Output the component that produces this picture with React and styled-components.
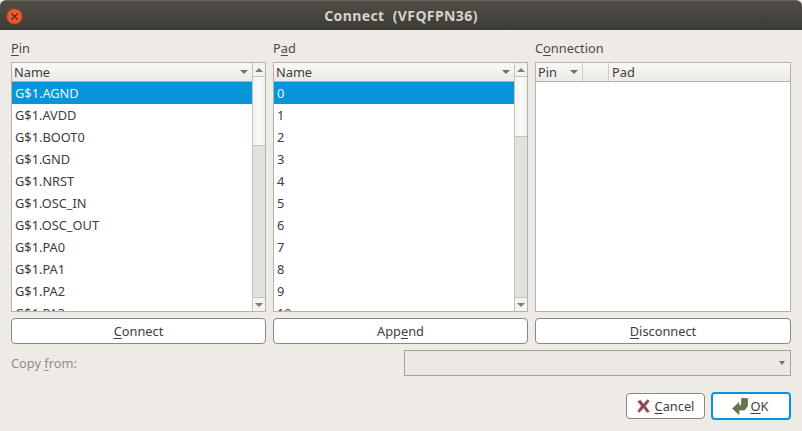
import styled, { createGlobalStyle } from "styled-components";

const GlobalStyle = createGlobalStyle`
  html, body {
    margin: 0;
    padding: 0;
    background: #2f2e2a;
  }
  * {
    box-sizing: border-box;
  }
`;

const Win = styled.div`
  width: 802px;
  height: 431px;
  display: flex;
  flex-direction: column;
  background: #eeebe6;
  font-family: "Noto Sans", "DejaVu Sans", sans-serif;
  font-size: 12.8px;
  color: #3d3d3d;
  overflow: hidden;
`;

const TitleBar = styled.div`
  position: relative;
  height: 30px;
  flex: none;
  display: flex;
  align-items: center;
  justify-content: center;
  background: linear-gradient(#514e47, #3d3b36);
  border-top: 1px solid #66635b;
  border-radius: 6px 6px 0 0;
  color: #d6d2c9;
  font-weight: 700;
  font-size: 14px;
  letter-spacing: 0.4px;
  white-space: pre;
`;

const CloseButton = styled.div`
  position: absolute;
  left: 6px;
  top: 7px;
  width: 17px;
  height: 17px;
  border-radius: 50%;
  background: radial-gradient(circle at 50% 40%, #f0693a, #d9491d);
  border: 1px solid #8c3a1e;
  display: grid;
  place-content: center;
`;

const Body = styled.div`
  flex: 1;
  display: flex;
  flex-direction: column;
  padding: 10px 11px 11px;
`;

const Columns = styled.div`
  display: grid;
  grid-template-columns: 255px 255px 256px;
  column-gap: 7px;
`;

const Column = styled.div`
  display: flex;
  flex-direction: column;
`;

const Label = styled.div`
  height: 22px;
  line-height: 16px;
  color: #4a4a48;
`;

const Key = styled.span`
  text-decoration: underline;
  text-underline-offset: 2px;
  text-decoration-thickness: 1px;
`;

const ListBox = styled.div`
  display: flex;
  height: 250px;
  border: 1px solid #b5b2ac;
  background: #fff;
  overflow: hidden;
`;

const ListMain = styled.div`
  flex: 1;
  min-width: 0;
  display: flex;
  flex-direction: column;
`;

const Header = styled.div`
  height: 19px;
  flex: none;
  display: flex;
  background: linear-gradient(#faf9f7, #edeae5);
  border-bottom: 1px solid #b5b2ac;
`;

const HeaderCell = styled.div`
  display: flex;
  align-items: center;
  justify-content: space-between;
  flex: ${(p) => (p.$width ? `0 0 ${p.$width}px` : 1)};
  padding: 0 3px 0 ${(p) => p.$pad ?? 2}px;
  border-right: ${(p) => (p.$divider ? "1px solid #cfccc6" : "none")};
`;

const Caret = styled.span`
  width: 0;
  height: 0;
  margin-right: ${(p) => p.$gap ?? 1}px;
  border-left: ${(p) => p.$size ?? 4}px solid transparent;
  border-right: ${(p) => p.$size ?? 4}px solid transparent;
  border-top: 4px solid #6e6e6a;
`;

const Rows = styled.div`
  flex: 1;
  overflow: hidden;
`;

const Row = styled.div`
  height: 22px;
  flex: none;
  display: flex;
  align-items: center;
  padding-left: 3px;
  background: ${(p) => (p.$selected ? "#0894d8" : "transparent")};
  color: ${(p) => (p.$selected ? "#e6f4fb" : "#3d3d3d")};
`;

const Scrollbar = styled.div`
  width: 13px;
  flex: none;
  display: flex;
  flex-direction: column;
  border-left: 1px solid #c6c3bd;
  background: #e3e1dc;
`;

const ScrollButton = styled.div`
  height: 14px;
  flex: none;
  display: grid;
  place-content: center;
  background: #f5f3f0;
  border-${(p) => (p.$down ? "top" : "bottom")}: 1px solid #c6c3bd;
`;

const ScrollArrow = styled.span`
  width: 0;
  height: 0;
  border-left: 4px solid transparent;
  border-right: 4px solid transparent;
  ${(p) => (p.$down ? "border-top" : "border-bottom")}: 4px solid #7d7c78;
`;

const Thumb = styled.div`
  height: ${(p) => p.$height}px;
  flex: none;
  background: linear-gradient(90deg, #f4f2ef, #fbfaf9 50%, #f2f0ec);
  border-bottom: 1px solid #c6c3bd;
`;

const Trough = styled.div`
  flex: 1;
`;

const PushButton = styled.div`
  height: 26px;
  margin-top: 6px;
  display: flex;
  align-items: center;
  justify-content: center;
  background: #fff;
  border: 1px solid #8a8884;
  border-radius: 4px;
`;

const CopyRow = styled.div`
  height: 26px;
  margin-top: 6px;
  display: flex;
  align-items: center;
  justify-content: space-between;
`;

const MutedLabel = styled.div`
  color: #8f8e8a;
`;

const Combo = styled.div`
  width: 387px;
  height: 26px;
  display: flex;
  align-items: center;
  justify-content: flex-end;
  padding-right: 5px;
  border: 1px solid #a5a39e;
  background: #ebe8e3;
`;

const Footer = styled.div`
  margin-top: 16px;
  display: flex;
  justify-content: flex-end;
  align-items: center;
  gap: 6px;
`;

const DialogButton = styled.div`
  width: ${(p) => p.$width}px;
  height: ${(p) => (p.$primary ? 28 : 26)}px;
  display: flex;
  align-items: center;
  justify-content: center;
  gap: ${(p) => (p.$primary ? 3 : 5)}px;
  padding-right: ${(p) => (p.$primary ? 2 : 0)}px;
  background: #fff;
  border: ${(p) => (p.$primary ? "2px solid #0894d8" : "1px solid #8a8884")};
  border-radius: 4px;
`;

const pins = ["AGND", "AVDD", "BOOT0", "GND", "NRST", "OSC_IN", "OSC_OUT", "PA0", "PA1", "PA2", "PA3"];
const pads = ["0", "1", "2", "3", "4", "5", "6", "7", "8", "9", "10"];

function ListPanel({ items, thumb }) {
  return (
    <ListBox>
      <ListMain>
        <Header>
          <HeaderCell>
            Name
            <Caret />
          </HeaderCell>
        </Header>
        <Rows>
          {items.map((item, i) => (
            <Row key={item} $selected={i === 0}>
              {item}
            </Row>
          ))}
        </Rows>
      </ListMain>
      <Scrollbar>
        <ScrollButton>
          <ScrollArrow />
        </ScrollButton>
        <Thumb $height={thumb} />
        <Trough />
        <ScrollButton $down>
          <ScrollArrow $down />
        </ScrollButton>
      </Scrollbar>
    </ListBox>
  );
}

function CloseIcon() {
  return (
    <svg width="9" height="9" viewBox="0 0 9 9">
      <path d="M1.5 1.5l6 6M7.5 1.5l-6 6" stroke="#57200f" strokeWidth="1.3" />
    </svg>
  );
}

function CancelIcon() {
  return (
    <svg width="13" height="14" viewBox="0 0 13 14">
      <path
        d="M0.5 2.5L3.5 1l3 4L10.5 0.5 12.5 2 8.5 7l4 5.5-2.5 1L6.5 9 2.5 13.5 0.5 12l3.8-5z"
        fill="#8c4650"
        stroke="#a9767c"
        strokeWidth="0.5"
      />
    </svg>
  );
}

function OkIcon() {
  return (
    <svg width="16" height="17" viewBox="0 0 16 17">
      <path
        d="M9.5 0.5h6v7.5l-3 4H7v4.5L0.5 10.5 7 4.5v3h2.5z"
        fill="#67754f"
        stroke="#515e3e"
        strokeWidth="0.6"
      />
    </svg>
  );
}

export default function App() {
  return (
    <Win>
      <GlobalStyle />
      <TitleBar>
        <CloseButton>
          <CloseIcon />
        </CloseButton>
        {"Connect  (VFQFPN36)"}
      </TitleBar>
      <Body>
        <Columns>
          <Column>
            <Label>
              <Key>P</Key>in
            </Label>
            <ListPanel items={pins.map((p) => `G$1.${p}`)} thumb={69} />
            <PushButton>
              <span>
                <Key>C</Key>onnect
              </span>
            </PushButton>
          </Column>
          <Column>
            <Label>
              P<Key>a</Key>d
            </Label>
            <ListPanel items={pads} thumb={60} />
            <PushButton>
              <span>
                App<Key>e</Key>nd
              </span>
            </PushButton>
          </Column>
          <Column>
            <Label>
              C<Key>o</Key>nnection
            </Label>
            <ListBox>
              <ListMain>
                <Header>
                  <HeaderCell $width={47} $divider>
                    Pin
                    <Caret />
                  </HeaderCell>
                  <HeaderCell $width={26} $divider />
                  <HeaderCell $pad={3}>Pad</HeaderCell>
                </Header>
                <Rows />
              </ListMain>
            </ListBox>
            <PushButton>
              <span>
                <Key>D</Key>isconnect
              </span>
            </PushButton>
          </Column>
        </Columns>
        <CopyRow>
          <MutedLabel>
            Copy <Key>f</Key>rom:
          </MutedLabel>
          <Combo>
            <Caret $gap={0} $size={3} />
          </Combo>
        </CopyRow>
        <Footer>
          <DialogButton $width={79}>
            <CancelIcon />
            <span>
              <Key>C</Key>ancel
            </span>
          </DialogButton>
          <DialogButton $width={80} $primary>
            <OkIcon />
            <span>
              <Key>O</Key>K
            </span>
          </DialogButton>
        </Footer>
      </Body>
    </Win>
  );
}
